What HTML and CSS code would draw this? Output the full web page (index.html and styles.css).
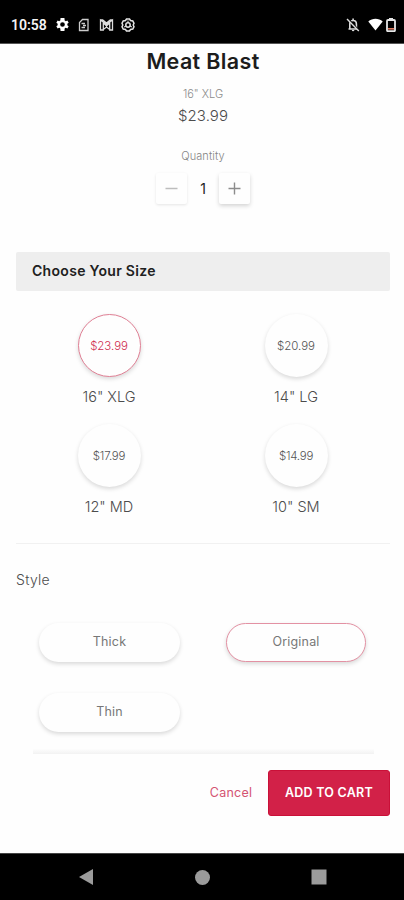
FILE: index.html
```
<!DOCTYPE html>
<html lang="en">
<head>
<meta charset="utf-8">
<title>Meat Blast</title>
<link rel="stylesheet" href="styles.css">
</head>
<body>
<div class="phone">
  <header class="status">
    <span class="clock">10:58</span>
    <svg class="gear" viewBox="2 2 20 20" width="13" height="13"><path fill="#fff" fill-rule="evenodd" d="M19.4 13a7.5 7.5 0 0 0 0-2l2.1-1.6-2-3.5-2.5 1a8 8 0 0 0-1.7-1L15 2H9l-.4 3.9a8 8 0 0 0-1.7 1l-2.4-1-2 3.5L4.600 11a7.500 7.500 0 0 0 0 2l-2.100 1.600 2 3.500 2.400-1a8 8 0 0 0 1.700 1L9 22h6l.3-3.900a8 8 0 0 0 1.700-1l2.500 1 2-3.500zM12 15.600a3.600 3.600 0 1 1 0-7.200 3.600 3.600 0 0 1 0 7.200z"/></svg>
    <svg class="sim" viewBox="0 0 12 14" width="12" height="14" fill="none" stroke="#ccc" stroke-width="1.300"><path d="M4.500 1.500H10V12.500H1.500V4.500zM3.500 5.500H7M3.500 9.500H7M5 7.500h3"/></svg>
    <svg class="mail" viewBox="0 0 15 14" width="15" height="14" fill="none" stroke="#ddd" stroke-width="1.300"><path d="M1.500 2v10h2.800V5l3.200 2.800L10.700 5v7h2.800V2L7.500 6.500zM4.300 11.500L7.500 9l3.200 2.500M1.500 2h2.200l3.800 3 3.800-3h2.200"/></svg>
    <svg class="hexagon" viewBox="0 0 14 14" width="14" height="14" fill="none" stroke="#e4e4e4" stroke-width="1.500"><path d="M5.500 1h3l1 1.500 2.300.4 1.200 2.400-.8 1.700.8 1.700-1.200 2.400-2.300.4-1 1.500h-3l-1-1.500-2.300-.4L1 8.700 1.800 7 1 5.300l1.200-2.400 2.300-.4z"/><circle cx="7" cy="7" r="2.200"/><path d="M7 2.500V5M3 9l2-1M11 9L9 8" stroke-width="1"/></svg>
    <svg class="bell" viewBox="0 0 14 15" width="14" height="15"><path d="M2.500 12h9M3.800 11.500V7c0-2 1.300-3.500 3.300-3.500s3.300 1.500 3.300 3.500v4.500M7.100 1.500v2" fill="none" stroke="#ddd" stroke-width="1.600"/><path d="M5.800 13h2.600a1.300 1.300 0 0 1-2.600 0z" fill="#ddd"/><path d="M2 1.500l11 12" stroke="#000" stroke-width="1.600"/><path d="M1 2l11.800 12" stroke="#ddd" stroke-width="1.400"/></svg>
    <svg class="wifi" viewBox="0 0 15 13" width="15" height="13"><path fill="#fff" d="M.3 3.400C4.300 0 10.700 0 14.700 3.400L7.500 12.400z"/></svg>
    <svg class="battery" viewBox="0 0 10 14" width="10" height="14"><path d="M3 0h4v2H3z" fill="#e6e6e6"/><rect x="1" y="2" width="8" height="11.200" rx="1" fill="#000" stroke="#e6e6e6" stroke-width="1.800"/><path d="M2 10.800h6" stroke="#e27c61" stroke-width="1.600"/></svg>
  </header>

  <main class="content">
    <section class="summary">
      <h1>Meat Blast</h1>
      <p class="chosen">16" XLG</p>
      <p class="price">$23.99</p>
      <p class="quantity-label">Quantity</p>
      <div class="stepper">
        <button class="step step-off" aria-label="Less"><svg viewBox="0 0 13 13" width="13" height="13"><path d="M.5 6.500h12" stroke="#bdbdbd" stroke-width="1.500"/></svg></button>
        <span class="count">1</span>
        <button class="step" aria-label="More"><svg viewBox="0 0 13 13" width="13" height="13"><path d="M.5 6.500h12M6.500.5v12" stroke="#8c8c8c" stroke-width="1.400"/></svg></button>
      </div>
    </section>

    <h2>Choose Your Size</h2>
    <div class="sizes">
      <div class="size"><button class="disc selected">$23.99</button><span>16" XLG</span></div>
      <div class="size"><button class="disc">$20.99</button><span>14" LG</span></div>
      <div class="size"><button class="disc narrow">$17.99</button><span>12" MD</span></div>
      <div class="size"><button class="disc narrow">$14.99</button><span>10" SM</span></div>
    </div>

    <h3>Style</h3>
    <div class="styles">
      <button class="pill">Thick</button>
      <button class="pill chosen-pill">Original</button>
      <button class="pill">Thin</button>
    </div>
    <div class="edge"></div>
    <footer class="actions">
      <button class="cancel">Cancel</button>
      <button class="add">ADD TO CART</button>
    </footer>
  </main>

  <nav class="system">
    <svg viewBox="0 0 14 16" width="14" height="16"><path d="M14 0v16L0 8z" fill="#9b9b9b"/></svg>
    <svg viewBox="0 0 15 15" width="15" height="15"><circle cx="7.500" cy="7.500" r="7.500" fill="#9b9b9b"/></svg>
    <svg viewBox="0 0 16 16" width="16" height="16"><path d="M.5.5h15v15H.5z" fill="#9b9b9b"/></svg>
  </nav>
</div>
</body>
</html>
```
FILE: styles.css
```
* { box-sizing: border-box; margin: 0; padding: 0; }
body { background: #fefefe; font-family: Inter, "Liberation Sans", sans-serif; color: #4c4c4c; }
button { font: inherit; color: inherit; border: 0; background: #fefefe; display: flex; align-items: center; justify-content: center; white-space: nowrap; }
svg { display: block; flex: none; }
.phone { width: 404px; height: 900px; display: flex; flex-direction: column; overflow: hidden; }

.status { height: 43.500px; flex: none; background: #000; display: flex; align-items: center; padding: 7px 8px 0 11px; border-bottom: 1px solid #555; }
.clock { width: 45px; color: #f4f4f4; font: 600 14px/16px Roboto, sans-serif; letter-spacing: 0; }
.sim { margin-left: 9px; }
.mail { margin-left: 9px; }
.hexagon { margin-left: 7px; }
.bell { margin-left: auto; }
.wifi { margin-left: 8px; }
.battery { margin-left: 3px; }

.content { height: 809.500px; flex: none; padding: 0 14px 0 16px; }
.summary { height: 208.500px; display: flex; flex-direction: column; align-items: center; }
h1 { margin-top: 4.500px; font-size: 21.500px; line-height: 26px; font-weight: 600; color: #1c1c1c; letter-spacing: .35px; }
.chosen { margin-top: 12px; font-size: 11px; line-height: 16px; font-weight: 300; color: #8c8c8c; letter-spacing: 0; }
.price { margin-top: 5px; font-size: 15px; line-height: 18px; font-weight: 300; letter-spacing: .1px; }
.quantity-label { margin-top: 23px; font-size: 11px; line-height: 16px; font-weight: 300; color: #858585; letter-spacing: .1px; }
.stepper { margin-top: 9px; display: flex; align-items: center; }
.step { width: 31px; height: 31px; border-radius: 2px; box-shadow: 0 2px 4px rgba(0,0,0,.17); }
.step-off { box-shadow: 0 1px 3px rgba(0,0,0,.1); }
.count { width: 32px; text-align: center; font-size: 14px; color: #222; }

h2 { height: 38.500px; padding-left: 16px; background: #eee; border-radius: 2px; color: #202020; font-size: 14px; line-height: 38px; font-weight: 600; letter-spacing: .3px; }
.sizes { height: 253px; padding-top: 23.500px; display: grid; grid-template-columns: 1fr 1fr; grid-auto-rows: 110px; border-bottom: 1px solid #f1f1f1; }
.size { display: flex; flex-direction: column; align-items: center; padding-right: 1px; font-size: 14.500px; line-height: 18px; font-weight: 300; letter-spacing: 0; }
.size span { margin-top: 11px; }
.disc { width: 63px; height: 63px; border-radius: 50%; font-size: 11.500px; letter-spacing: -.05px; color: #555; box-shadow: 0 2px 4px rgba(0,0,0,.15); }
.narrow { letter-spacing: -.25px; }
.selected { color: #d02d50; border: 1px solid #e08095; }

h3 { margin-top: 26px; font-size: 14px; line-height: 20px; font-weight: 300; letter-spacing: .3px; }
.styles { margin-top: 33px; padding-left: 23px; display: grid; grid-template-columns: 141px 140px; column-gap: 46px; row-gap: 31px; }
.pill { height: 39px; border-radius: 20px; font-size: 12.500px; color: #777; letter-spacing: .2px; padding-bottom: 1px; box-shadow: 0 2px 4px rgba(0,0,0,.15); }
.chosen-pill { border: 1px solid #e391a3; }
.edge { height: 5px; margin: 17px 16px 0 17px; background: linear-gradient(#fdfdfd, #f2f2f2); }
.actions { margin-top: 16px; display: flex; justify-content: flex-end; align-items: center; }
.cancel { width: 74px; font-size: 12.500px; color: #d45472; letter-spacing: .25px; padding-bottom: 1px; }
.add { width: 122px; height: 46px; border-radius: 3px; background: #d22148; color: #fff; font-size: 12.500px; font-weight: 600; letter-spacing: .25px; padding-bottom: 1px; border: 1px solid #ca1038; }

.system { height: 47px; flex: none; background: #000; border-top: 1px solid #444; display: flex; align-items: center; padding: 0 0 0 79px; gap: 101.500px; }
```
